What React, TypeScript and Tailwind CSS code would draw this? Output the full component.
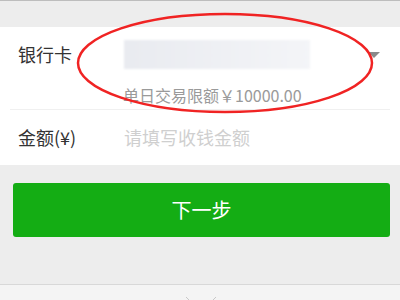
export default function App() {
  return (
    <div
      className="relative h-[300px] w-[400px] overflow-hidden border-t border-[#bdbdbd] bg-[#ededed]"
      style={{ fontFamily: '"Noto Sans CJK SC", "Noto Sans", sans-serif' }}
    >
      <div className="h-[26px]" />
      <div className="bg-white">
        <div className="flex items-center pt-[13px]">
          <div className="w-[124px] pl-[18px] text-[18px] leading-[29px] text-[#333]">银行卡</div>
          <div className="h-[29px] w-[186px] bg-gradient-to-r from-[#e9ebf0] to-[#f4f5f8] blur-[1px]" />
          <div className="ml-auto mr-[20px] h-0 w-0 border-x-[6px] border-t-[6px] border-x-transparent border-t-[#8a8a8a]" />
        </div>
        <div className="mt-[16px] pl-[123px] text-[16px] leading-[20px] text-[#9a9a9a]">单日交易限额￥10000.00</div>
        <div className="mx-[10px] mt-[4px] h-px bg-[#f0f0f0]" />
        <div className="flex h-[55px] items-center">
          <div className="w-[124px] pl-[18px] text-[18px] text-[#333]">金额(¥)</div>
          <div className="text-[18px] text-[#cfcfcf]">请填写收钱金额</div>
        </div>
      </div>
      <div className="h-[119px] pt-[18px]">
        <button className="ml-[13px] flex h-[54px] w-[377px] items-center justify-center rounded-[3px] bg-[#14ad14] text-[20px] text-white">
          下一步
        </button>
      </div>
      <div className="h-full border-t border-[#d8d8d8] bg-[#f4f4f4]">
        <svg width="400" height="16" className="block">
          <path d="M186 12 L190 16" stroke="#c8c8c8" strokeWidth="1" fill="none" />
          <path d="M216 12 L212 16" stroke="#c8c8c8" strokeWidth="1" fill="none" />
        </svg>
      </div>
      <svg width="400" height="300" className="pointer-events-none absolute left-0 top-0">
        <ellipse cx="225" cy="62" rx="147" ry="49" fill="none" stroke="#f02323" strokeWidth="2.5" />
      </svg>
    </div>
  );
}
